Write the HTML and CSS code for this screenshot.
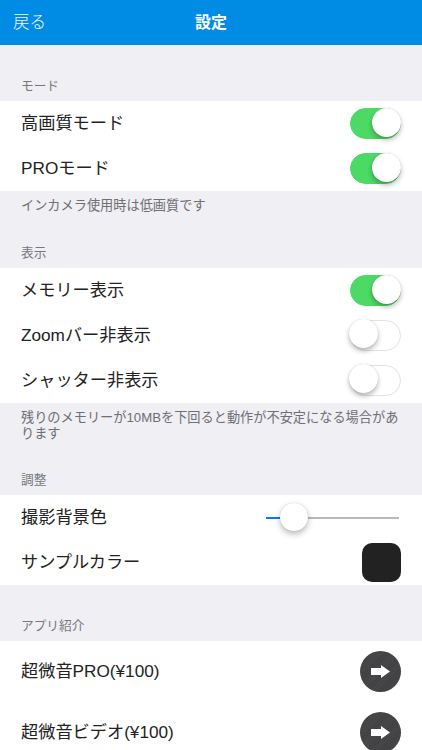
FILE: index.html
```html
<!DOCTYPE html>
<html lang="ja">
<head>
<meta charset="utf-8">
<title>設定</title>
<link rel="stylesheet" href="styles.css">
</head>
<body>
<div class="screen">
  <header class="navbar">
    <span class="nav-back">戻る</span>
    <span class="nav-title">設定</span>
  </header>
  <section class="group group-first">
    <h2 class="group-label">モード</h2>
    <div class="rows">
      <div class="row"><span class="row-text">高画質モード</span><span class="toggle on"></span></div>
      <div class="row"><span class="row-text">PROモード</span><span class="toggle on"></span></div>
    </div>
    <p class="note note-one">インカメラ使用時は低画質です</p>
  </section>
  <section class="group">
    <h2 class="group-label">表示</h2>
    <div class="rows">
      <div class="row"><span class="row-text">メモリー表示</span><span class="toggle on"></span></div>
      <div class="row"><span class="row-text">Zoomバー非表示</span><span class="toggle"></span></div>
      <div class="row"><span class="row-text">シャッター非表示</span><span class="toggle"></span></div>
    </div>
    <p class="note note-two">残りのメモリーが10MBを下回ると動作が不安定になる場合があります</p>
  </section>
  <section class="group">
    <h2 class="group-label">調整</h2>
    <div class="rows">
      <div class="row"><span class="row-text">撮影背景色</span>
        <span class="slider"><span class="slider-fill"></span><span class="slider-knob"></span></span>
      </div>
      <div class="row"><span class="row-text">サンプルカラー</span><span class="swatch"></span></div>
    </div>
  </section>
  <section class="group">
    <h2 class="group-label group-label-tall">アプリ紹介</h2>
    <div class="rows">
      <div class="row row-tall"><span class="row-text">超微音PRO(¥100)</span>
        <span class="go"><svg viewBox="0 0 19 13" width="19" height="13"><path d="M0 3h10V0l9 6.5-9 6.5v-3H0z" fill="#fff"/></svg></span>
      </div>
      <div class="row row-tall"><span class="row-text">超微音ビデオ(¥100)</span>
        <span class="go"><svg viewBox="0 0 19 13" width="19" height="13"><path d="M0 3h10V0l9 6.5-9 6.5v-3H0z" fill="#fff"/></svg></span>
      </div>
    </div>
  </section>
</div>
</body>
</html>
```
FILE: styles.css
```css
* { box-sizing: border-box; }
html, body { margin: 0; padding: 0; }
body {
  background: #efeff4;
  font-family: "Liberation Sans", "Noto Sans CJK JP", sans-serif;
  color: #222;
}
.screen { height: 750px; overflow: hidden; background: #efeff4; }
.navbar {
  height: 45px;
  background: #008ce4;
  color: #fff;
  display: grid;
  grid-template-columns: 1fr auto 1fr;
  align-items: center;
  padding: 0 13px 4px;
}
.nav-back { font-size: 16.5px; font-weight: 300; color: #f0f8fd; }
.nav-title { font-size: 16px; font-weight: 700; }
.group-label {
  margin: 0;
  height: 39px;
  padding: 0 21px 6px;
  display: flex;
  align-items: flex-end;
  font-size: 12.7px;
  font-weight: 400;
  line-height: 18px;
  color: #77777c;
}
.group-label-tall { height: 56px; }
.group-first { padding-top: 17px; }
.rows { background: #fff; }
.row {
  height: 45px;
  display: flex;
  align-items: center;
  justify-content: space-between;
  padding: 0 21px;
}
.row-text {
  font-size: 17.2px;
  padding-bottom: 4px;
  color: #222;
}
.row-tall { height: 61px; }
.note {
  margin: 0;
  padding: 7px 21px 0;
  font-size: 13.2px;
  line-height: 16px;
  color: #6e6e73;
}
.note-one { height: 38px; }
.note-two { height: 53px; padding-right: 20px; }
.toggle {
  position: relative;
  width: 51.5px;
  height: 31px;
  margin-bottom: 1px;
  border-radius: 15.5px;
  background: #fff;
  border: 1.5px solid #e2e2e2;
}
.toggle::after {
  content: "";
  position: absolute;
  left: -1.5px;
  top: -1.5px;
  width: 29px;
  height: 29px;
  border-radius: 50%;
  background: #fff;
  box-shadow: 0 3px 5px rgba(0,0,0,.28), 0 0 1px rgba(0,0,0,.2);
}
.toggle.on { background: #4cd964; border-color: #4cd964; }
.toggle.on::after { left: auto; right: -.5px; top: -.5px; }
.slider {
  position: relative;
  width: 133px;
  height: 2px;
  margin-right: 2px;
  background: #b9b9b9;
}
.slider-fill {
  position: absolute;
  left: 0;
  top: 0;
  width: 28px;
  height: 2px;
  background: #007aff;
}
.slider-knob {
  position: absolute;
  left: 14px;
  top: -14px;
  width: 28px;
  height: 28px;
  border-radius: 50%;
  background: #fff;
  box-shadow: 0 3px 6px rgba(0,0,0,.28), 0 0 1px rgba(0,0,0,.2);
}
.swatch {
  width: 39px;
  height: 39px;
  border-radius: 10px;
  background: #222;
}
.go {
  width: 41px;
  height: 41px;
  border-radius: 50%;
  background: repeating-linear-gradient(135deg, #48484a 0 1px, #404042 1px 2px);
  display: flex;
  align-items: center;
  justify-content: center;
}
```
